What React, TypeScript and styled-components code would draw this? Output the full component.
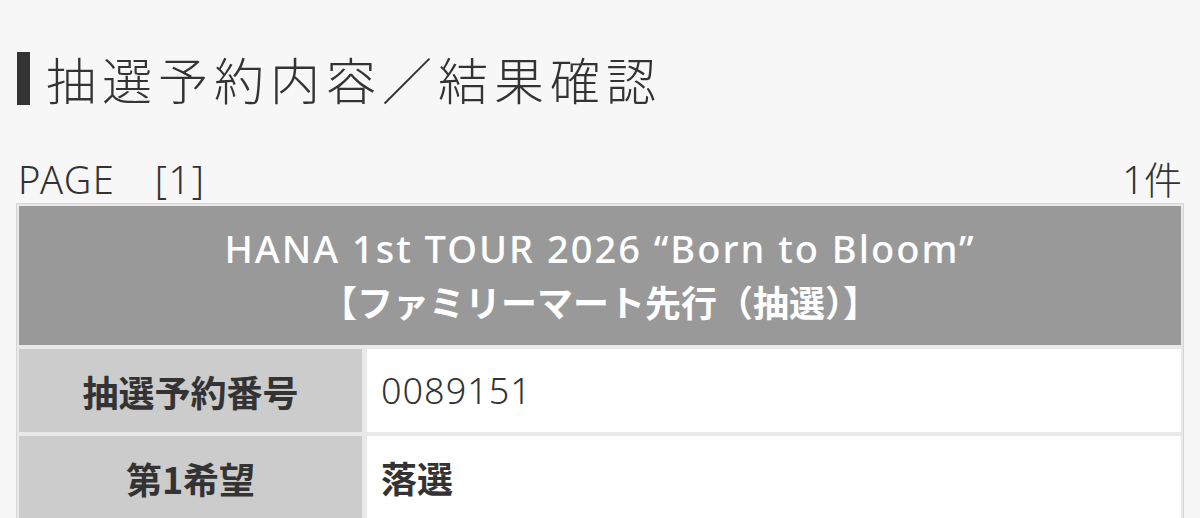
import React from 'react';
import styled, { createGlobalStyle } from 'styled-components';

const GlobalStyle = createGlobalStyle`
	html, body {
		margin: 0;
		padding: 0;
		background: #f7f7f7;
	}
	body {
		font-family: "Noto Sans", "Noto Sans CJK JP", sans-serif;
		color: #333;
	}
`;

const Page = styled.div`
	padding: 52px 16px 0;
`;

const Heading = styled.h1`
	display: flex;
	align-items: center;
	height: 53px;
	margin: 0;
	padding-left: 1px;
	font-size: 50px;
	font-weight: 300;
	letter-spacing: 6px;
	color: #333;
`;

const HeadingBar = styled.span`
	width: 13px;
	height: 100%;
	background: #333;
	margin-right: 16px;
	flex-shrink: 0;
`;

const Pager = styled.div`
	display: flex;
	justify-content: space-between;
	align-items: center;
	margin-top: 52px;
	height: 44px;
	padding: 0 2px;
	font-size: 38px;
	font-weight: 300;
	line-height: 44px;
`;

const PageLabel = styled.span`
	letter-spacing: 1.5px;
`;

const Table = styled.div`
	margin-top: 2px;
	border: 1px solid #d6d6d6;
	background: #e9e9e9;
	padding: 2px;
	display: grid;
	grid-template-columns: 343px 1fr;
	gap: 4px 5px;
	overflow: hidden;
`;

const Header = styled.div`
	grid-column: 1 / -1;
	background: #999;
	color: #fff;
	text-align: center;
	font-size: 36px;
	line-height: 53px;
	padding: 16px 0 17px;
`;

const HeaderTitle = styled.div`
	font-size: 38px;
	font-weight: 500;
	letter-spacing: 2px;
`;

const HeaderSub = styled.div`
	font-weight: 700;
	font-family: "Noto Sans CJK JP", sans-serif;
`;

const Label = styled.div`
	background: #ccc;
	height: 83px;
	display: flex;
	align-items: center;
	justify-content: center;
	font-family: "Noto Sans CJK JP", sans-serif;
	font-size: 36px;
	font-weight: 700;
	color: #333;
`;

const Value = styled.div<{ bold?: boolean }>`
	background: #fff;
	display: flex;
	align-items: center;
	padding-left: 14px;
	font-size: 36px;
	letter-spacing: ${({ bold }) => (bold ? 0 : 1)}px;
	font-weight: ${({ bold }) => (bold ? 700 : 300)};
	color: #333;
`;

export default function App(): JSX.Element {
	return (
		<Page>
			<GlobalStyle />
			<Heading>
				<HeadingBar />
				抽選予約内容／結果確認
			</Heading>
			<Pager>
				<PageLabel>PAGE　[1]</PageLabel>
				<span>1件</span>
			</Pager>
			<Table>
				<Header>
					<HeaderTitle>HANA 1st TOUR 2026 “Born to Bloom”</HeaderTitle>
					<HeaderSub>【ファミリーマート先行（抽選）】</HeaderSub>
				</Header>
				<Label>抽選予約番号</Label>
				<Value>0089151</Value>
				<Label>第1希望</Label>
				<Value bold>落選</Value>
			</Table>
		</Page>
	);
}
